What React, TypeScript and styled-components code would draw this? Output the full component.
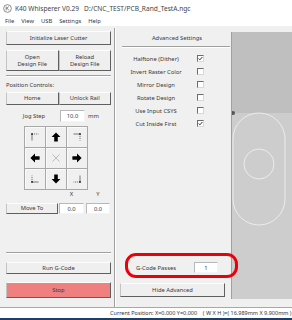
import React from "react";
import styled, {createGlobalStyle} from "styled-components";

const Global = createGlobalStyle`
  html, body { margin: 0; padding: 0; }
  body {
    background: #f0f0f0;
    font-family: "Noto Sans", "Liberation Sans", sans-serif;
    font-size: 5.8px;
    color: #383838;
  }
  * { box-sizing: border-box; }
`;

const Window = styled.div`
  width: 292px;
  height: 320px;
  display: flex;
  flex-direction: column;
  overflow: hidden;
  background: #f0f0f0;
`;

const TitleBar = styled.div`
  height: 16px;
  flex: none;
  background: #fff;
  display: flex;
  align-items: center;
  gap: 3px;
  padding-left: 3px;
  white-space: nowrap;
  font-size: 6.6px;
  color: #444;
`;

const MenuBar = styled.div`
  height: 10px;
  flex: none;
  background: #fff;
  display: flex;
  align-items: center;
  padding-left: 5px;
  gap: 7px;
  font-size: 5.8px;
`;

const Main = styled.div`
  flex: 1;
  display: flex;
  min-height: 0;
`;

const LeftPanel = styled.div`
  width: 111px;
  flex: none;
  padding: 5px 0 9px 6px;
  display: flex;
  flex-direction: column;
`;

const VDivider = styled.div`
  width: 2px;
  flex: none;
  margin: 2px 2px 0 3px;
  border-left: 1px solid #a0a0a0;
  border-right: 1px solid #fff;
`;

const AdvPanel = styled.div`
  width: 112px;
  flex: none;
  padding: 8px 0 10px 2px;
  display: flex;
  flex-direction: column;
`;

const Row = styled.div<{h: number; mt?: number}>`
  display: flex;
  align-items: center;
  height: ${p => p.h}px;
  margin-top: ${p => p.mt ?? 0}px;
  flex: none;
`;

const Button = styled.button<{h: number; w?: number; danger?: boolean}>`
  height: ${p => p.h}px;
  ${p => (p.w ? `width: ${p.w}px; flex: none;` : "flex: 1;")}
  margin: 0;
  padding: 0;
  font: inherit;
  color: inherit;
  line-height: 1.2;
  background: ${p => (p.danger ? "#f08080" : "#efefef")};
  border: 1px solid;
  border-color: #fdfdfd #5f5f5f #5f5f5f #c4c4c4;
  display: flex;
  align-items: center;
  justify-content: center;
  text-align: center;
`;

const Separator = styled.div<{mt: number; ml?: number}>`
  height: 2px;
  flex: none;
  margin-top: ${p => p.mt}px;
  margin-left: ${p => p.ml ?? 0}px;
  border-top: 1px solid #a0a0a0;
  border-bottom: 1px solid #fff;
`;

const Label = styled.div<{mt?: number}>`
  height: 8px;
  line-height: 8px;
  flex: none;
  margin-top: ${p => p.mt ?? 0}px;
  white-space: nowrap;
`;

const Field = styled.div<{w: number; ml?: number}>`
  width: ${p => p.w}px;
  height: 100%;
  flex: none;
  margin-left: ${p => p.ml ?? 0}px;
  background: #fff;
  border: 1px solid;
  border-color: #b8b8b8 #f4f4f4 #f4f4f4 #b8b8b8;
  display: flex;
  align-items: center;
  justify-content: center;
`;

const Text = styled.span<{w?: number; ml?: number}>`
  ${p => (p.w ? `width: ${p.w}px;` : "")}
  margin-left: ${p => p.ml ?? 0}px;
  flex: none;
  text-align: center;
  white-space: nowrap;
`;

const JogGrid = styled.div`
  display: grid;
  grid-template-columns: repeat(3, 21px);
  grid-template-rows: repeat(3, 21px);
  margin: 4px 0 0 18px;
  width: 64px;
  border-top: 1px solid #a8a8a8;
  border-left: 1px solid #a8a8a8;
  flex: none;
`;

const JogButton = styled.div`
  border-right: 1px solid #a8a8a8;
  border-bottom: 1px solid #a8a8a8;
  box-shadow: inset 1px 1px #fafafa;
  background: #f0f0f0;
  display: flex;
  align-items: center;
  justify-content: center;
`;

const Spacer = styled.div`
  flex: 1;
`;

const Heading = styled.div`
  height: 8px;
  line-height: 8px;
  text-align: center;
  margin-left: 4px;
`;

const OptionGrid = styled.div`
  display: grid;
  grid-template-columns: 64px 1fr;
  grid-auto-rows: 13px;
  margin: 4px 0 0 4px;
  column-gap: 6px;
  align-items: center;
`;

const OptionLabel = styled.div`
  text-align: center;
  white-space: nowrap;
`;

const Check = styled.div`
  width: 7px;
  height: 7px;
  margin-left: 3px;
  background: #fff;
  border: 1px solid;
  border-color: #6c6c6c #d8d8d8 #d8d8d8 #6c6c6c;
  display: flex;
  align-items: center;
  justify-content: center;
`;

const PassesRow = styled.div`
  position: relative;
  display: grid;
  grid-template-columns: 64px 24px;
  column-gap: 6px;
  height: 11px;
  margin-left: 4px;
  align-items: center;
  flex: none;
`;

const Highlight = styled.div`
  position: absolute;
  left: 1px;
  right: -8px;
  top: -9px;
  bottom: -5px;
  border: 3px solid #e8000c;
  border-radius: 11px;
  pointer-events: none;
`;

const CanvasArea = styled.div`
  flex: 1;
  margin: 6px 0 8px 1px;
  background: #cdcdcd;
  border-left: 1px solid #a0a0a0;
  overflow: hidden;
`;

const StatusBar = styled.div`
  height: 11px;
  flex: none;
  background: #fff;
  border-top: 1px solid #a8a8a8;
  display: flex;
  align-items: center;
  padding-left: 110px;
  white-space: nowrap;
  font-size: 5.5px;
  color: #333;
`;

const Taskbar = styled.div`
  height: 2px;
  flex: none;
  background: #1d3e66;
`;

const Arrow = ({rot}: {rot: number}) => (
  <svg width="10" height="10" viewBox="-5 -5 10 10">
    <polygon points="0,-4.6 4.4,0 1.8,0 1.8,4.6 -1.8,4.6 -1.8,0 -4.4,0" fill="#000" transform={`rotate(${rot})`} />
  </svg>
);

const Corner = ({rot}: {rot: number}) => (
  <svg width="10" height="10" viewBox="-5 -5 10 10">
    <g transform={`rotate(${rot})`} stroke="#444" strokeWidth="0.7" fill="none">
      <line x1="-3" y1="-3" x2="3.5" y2="-3" strokeDasharray="1.2 0.8" />
      <line x1="-3" y1="-3" x2="-3" y2="3.5" />
      <circle cx="-3" cy="-3" r="0.9" fill="#222" stroke="none" />
    </g>
  </svg>
);

const Cross = () => (
  <svg width="10" height="10" viewBox="0 0 10 10">
    <path d="M1.5 1.5 L8.5 8.5 M8.5 1.5 L1.5 8.5" stroke="#999" strokeWidth="0.6" />
  </svg>
);

const Tick = () => (
  <svg width="5" height="5" viewBox="0 0 6 6">
    <path d="M0.8 3 L2.3 4.6 L5.2 1.2" stroke="#222" strokeWidth="1.1" fill="none" />
  </svg>
);

const AppIcon = () => (
  <svg width="9" height="9" viewBox="0 0 10 10">
    <circle cx="5" cy="5" r="4.3" fill="none" stroke="#666" strokeWidth="0.8" />
    <path d="M3.5 2.8 L3.5 7.2 M3.5 5 L6.5 2.8 M4.4 4.4 L6.6 7.2" stroke="#666" strokeWidth="0.8" fill="none" />
  </svg>
);

const options = [
  {label: "Halftone (Dither)", checked: true},
  {label: "Invert Raster Color"},
  {label: "Mirror Design"},
  {label: "Rotate Design"},
  {label: "Use Input CSYS"},
  {label: "Cut Inside First", checked: true},
];

export default function App() {
  return (
    <Window>
      <Global />
      <TitleBar>
        <AppIcon />
        <span>K40 Whisperer V0.29 &nbsp; D:/CNC_TEST/PCB_Rand_TestA.ngc</span>
      </TitleBar>
      <MenuBar>
        <span>File</span>
        <span>View</span>
        <span>USB</span>
        <span>Settings</span>
        <span>Help</span>
      </MenuBar>
      <Main>
        <LeftPanel>
          <Row h={14}>
            <Button h={14}>Initialize Laser Cutter</Button>
          </Row>
          <Row h={21} mt={5}>
            <Button h={21}>Open<br />Design File</Button>
            <Button h={21}>Reload<br />Design File</Button>
          </Row>
          <Separator mt={4} />
          <Label mt={4}>Position Controls:</Label>
          <Row h={13} mt={3}>
            <Button h={13}>Home</Button>
            <Button h={13}>Unlock Rail</Button>
          </Row>
          <Row h={12} mt={5}>
            <Text w={40} ml={8}>Jog Step</Text>
            <Field w={25} ml={6}>10.0</Field>
            <Text ml={3}>mm</Text>
          </Row>
          <JogGrid>
            <JogButton><Corner rot={0} /></JogButton>
            <JogButton><Arrow rot={0} /></JogButton>
            <JogButton><Corner rot={90} /></JogButton>
            <JogButton><Arrow rot={270} /></JogButton>
            <JogButton><Cross /></JogButton>
            <JogButton><Arrow rot={90} /></JogButton>
            <JogButton><Corner rot={270} /></JogButton>
            <JogButton><Arrow rot={180} /></JogButton>
            <JogButton><Corner rot={180} /></JogButton>
          </JogGrid>
          <Row h={8}>
            <Text w={25} ml={53}>X</Text>
            <Text w={24} ml={2}>Y</Text>
          </Row>
          <Row h={11} mt={5}>
            <Button h={11} w={52}>Move To</Button>
            <Field w={25} ml={1}>0.0</Field>
            <Field w={24} ml={2}>0.0</Field>
          </Row>
          <Spacer />
          <Separator mt={0} />
          <Row h={12} mt={8}>
            <Button h={12}>Run G-Code</Button>
          </Row>
          <Row h={16} mt={8}>
            <Button h={16} danger>Stop</Button>
          </Row>
        </LeftPanel>
        <VDivider />
        <AdvPanel>
          <Heading>Advanced Settings</Heading>
          <Separator mt={4} ml={2} />
          <OptionGrid>
            {options.map(o => (
              <React.Fragment key={o.label}>
                <OptionLabel>{o.label}</OptionLabel>
                <Check>{o.checked && <Tick />}</Check>
              </React.Fragment>
            ))}
          </OptionGrid>
          <Spacer />
          <PassesRow>
            <OptionLabel>G-Code Passes</OptionLabel>
            <Field w={24}>1</Field>
            <Highlight />
          </PassesRow>
          <Row h={14} mt={10}>
            <Button h={14} w={105}>Hide Advanced</Button>
          </Row>
        </AdvPanel>
        <CanvasArea>
          <svg width="61" height="270" viewBox="0 0 61 270">
            <rect x="0" y="0" width="61" height="81" fill="#bfbfbf" />
            <rect x="1" y="81" width="52" height="112" rx="26" fill="none" stroke="#f4f4f4" strokeWidth="0.8" />
            <circle cx="27" cy="132" r="15" fill="none" stroke="#f4f4f4" strokeWidth="0.8" />
            <circle cx="1" cy="81" r="2" fill="#555" />
          </svg>
        </CanvasArea>
      </Main>
      <StatusBar>Current Position: X=0.000 Y=0.000 &nbsp;&nbsp; ( W X H )=( 16.989mm X 9.900mm )</StatusBar>
      <Taskbar />
    </Window>
  );
}
